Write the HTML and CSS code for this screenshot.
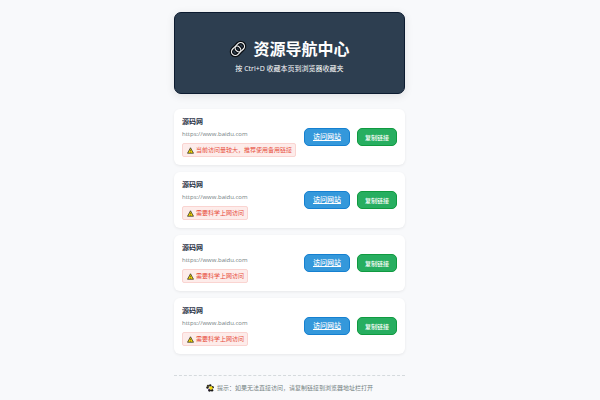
FILE: index.html
```html
<!DOCTYPE html>
<html lang="zh-CN">
<head>
<meta charset="UTF-8">
<meta name="viewport" content="width=device-width, initial-scale=1">
<title>资源导航中心</title>
<link rel="stylesheet" href="styles.css">
</head>
<body>
<svg class="defs" aria-hidden="true">
  <symbol id="warn" viewBox="0 0 14 14">
    <path d="M7 1.5 13 12.5H1Z" fill="#f2d600" stroke="#222" stroke-width="1.4" stroke-linejoin="round"/>
    <path d="M7 5.5v3.2M7 10v1.2" stroke="#222" stroke-width="1"/>
  </symbol>
</svg>
<div class="container">
  <header class="header">
    <h1 class="title">
      <svg class="link-icon" viewBox="0 0 18 18" aria-hidden="true">
        <g fill="none" transform="rotate(-45 9 9)">
          <g stroke="#0b0f14" stroke-width="3.6">
            <rect x="1.4" y="5.2" width="10" height="7.6" rx="3.8"/>
            <rect x="6.6" y="5.2" width="10" height="7.6" rx="3.8"/>
          </g>
          <g stroke="#f2f2f2" stroke-width="1.2">
            <rect x="1.4" y="5.2" width="10" height="7.6" rx="3.8"/>
            <rect x="6.6" y="5.2" width="10" height="7.6" rx="3.8"/>
          </g>
        </g>
      </svg>
      <span>资源导航中心</span>
    </h1>
    <p class="subtitle">按 Ctrl+D 收藏本页到浏览器收藏夹</p>
  </header>

  <main class="list">
    <article class="card">
      <div class="info">
        <h2 class="name">源码网</h2>
        <p class="url">https://www.baidu.com</p>
        <p class="note"><svg class="warn-icon" aria-hidden="true"><use href="#warn"/></svg>当前访问量较大，推荐使用备用链接</p>
      </div>
      <div class="actions">
        <a class="btn visit" href="https://www.baidu.com">访问网站</a>
        <button class="btn copy" type="button">复制链接</button>
      </div>
    </article>
    <article class="card">
      <div class="info">
        <h2 class="name">源码网</h2>
        <p class="url">https://www.baidu.com</p>
        <p class="note"><svg class="warn-icon" aria-hidden="true"><use href="#warn"/></svg>需要科学上网访问</p>
      </div>
      <div class="actions">
        <a class="btn visit" href="https://www.baidu.com">访问网站</a>
        <button class="btn copy" type="button">复制链接</button>
      </div>
    </article>
    <article class="card">
      <div class="info">
        <h2 class="name">源码网</h2>
        <p class="url">https://www.baidu.com</p>
        <p class="note"><svg class="warn-icon" aria-hidden="true"><use href="#warn"/></svg>需要科学上网访问</p>
      </div>
      <div class="actions">
        <a class="btn visit" href="https://www.baidu.com">访问网站</a>
        <button class="btn copy" type="button">复制链接</button>
      </div>
    </article>
    <article class="card">
      <div class="info">
        <h2 class="name">源码网</h2>
        <p class="url">https://www.baidu.com</p>
        <p class="note"><svg class="warn-icon" aria-hidden="true"><use href="#warn"/></svg>需要科学上网访问</p>
      </div>
      <div class="actions">
        <a class="btn visit" href="https://www.baidu.com">访问网站</a>
        <button class="btn copy" type="button">复制链接</button>
      </div>
    </article>
  </main>

  <footer class="footer">
    <svg class="tip-icon" viewBox="0 0 16 16" aria-hidden="true">
      <g fill="#1c1c1c">
        <circle cx="4" cy="3.8" r="2.3"/><circle cx="8.5" cy="3" r="2.4"/>
        <circle cx="3" cy="7" r="2.4"/><circle cx="13" cy="6.5" r="2.6"/>
        <circle cx="12" cy="12.5" r="2.6"/><circle cx="7" cy="12.5" r="2.8"/>
      </g>
      <circle cx="10" cy="8" r="3.4" fill="#f5d90a"/>
      <path d="M4 9.5 7 11 5.5 13.5Z" fill="#8a4fa3"/>
      <circle cx="4" cy="4" r="1" fill="#e8c832"/>
    </svg>
    <span>提示：如果无法直接访问，请复制链接到浏览器地址栏打开</span>
  </footer>
</div>
</body>
</html>
```
FILE: styles.css
```css
* {
  box-sizing: border-box;
  margin: 0;
  padding: 0;
}

body {
  padding: 12px 29px 0 8px;
  background: #f8f9fb;
  color: #2c3e50;
  font-family: "Open Sans", "Noto Sans CJK SC", sans-serif;
  font-size: 6px;
  line-height: 8px;
}

.defs {
  display: none;
}

.container {
  max-width: 231px;
  margin: 0 auto;
}

.header {
  margin-bottom: 15px;
  padding: 24px 8px 20px;
  border: 1px solid #0c1b30;
  border-radius: 7px;
  background: #2d3e50;
  box-shadow: 0 2px 8px rgba(0, 0, 0, 0.1);
  color: #fff;
  text-align: center;
}

.title {
  display: flex;
  align-items: center;
  justify-content: center;
  gap: 6px;
  margin-bottom: 4px;
  font-size: 16px;
  line-height: 24px;
}

.link-icon {
  width: 18px;
  height: 18px;
}

.subtitle {
  font-size: 7px;
  line-height: 8px;
}

.list {
  display: grid;
  gap: 7px;
}

.card {
  display: flex;
  align-items: center;
  justify-content: space-between;
  padding: 8px;
  border-radius: 6px;
  background: #fff;
  box-shadow: 0 1px 3px rgba(0, 0, 0, 0.07);
}

.info {
  display: flex;
  flex-direction: column;
  align-items: flex-start;
}

.name {
  margin-bottom: 2px;
  color: #1f3044;
  font-size: 7px;
  line-height: 10px;
}

.url {
  margin-bottom: 4px;
  color: #748182;
  font-size: 6px;
  line-height: 10px;
}

.note {
  display: inline-flex;
  align-items: center;
  gap: 2px;
  padding: 2px 3px 2px 4px;
  border: 1px solid #fad4d1;
  border-radius: 2px;
  background: #fdecea;
  color: #e74c3c;
  white-space: nowrap;
}

.warn-icon {
  width: 7px;
  height: 7px;
}

.actions {
  display: flex;
  gap: 7px;
}

.btn {
  display: flex;
  align-items: center;
  justify-content: center;
  height: 18px;
  border-radius: 5px;
  color: #fff;
  font-family: inherit;
  font-weight: 500;
  white-space: nowrap;
  cursor: pointer;
}

.visit {
  padding: 0 8px;
  border: 1px solid #1580d0;
  background: #3498db;
  font-size: 7px;
  text-decoration: underline;
}

.copy {
  padding: 0 7px;
  border: 1px solid #109a40;
  background: #27ae60;
  font-size: 6px;
}

.footer {
  display: flex;
  align-items: center;
  justify-content: center;
  gap: 3px;
  margin-top: 21px;
  padding-top: 8px;
  border-top: 1px dashed #d5dadd;
  color: #748182;
}

.tip-icon {
  width: 8px;
  height: 8px;
}
```
